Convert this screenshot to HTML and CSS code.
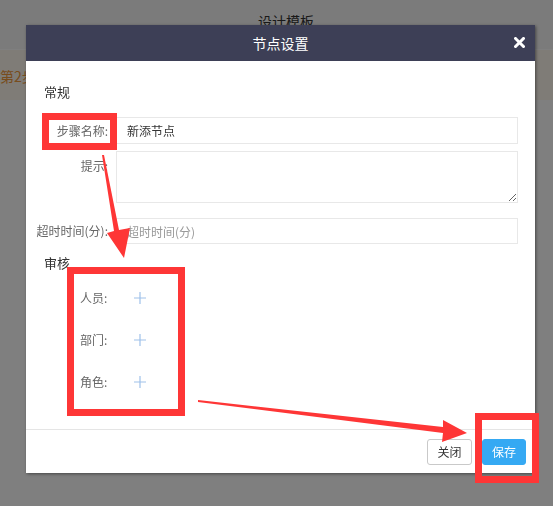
FILE: index.html
```html
<!DOCTYPE html>
<html lang="zh-CN">
<head>
  <meta charset="UTF-8" />
  <title>设计模板</title>
  <link rel="stylesheet" href="styles.css">
</head>
<body>

  <div class="page">
    <div class="page-head">设计模板</div>
    <div class="steps"><span class="step">第2步</span></div>
  </div>

  <div class="mask"></div>

  <div class="dialog">
    <div class="dialog-head">
      <span class="dialog-title">节点设置</span>
      <span class="dialog-close">
        <svg width="11" height="11" viewBox="0 0 11 11"><path d="M1.5 1.5 L9.5 9.5 M9.5 1.5 L1.5 9.5" stroke="#fff" stroke-width="3" stroke-linecap="square"/></svg>
      </span>
    </div>

    <div class="dialog-body">
      <div class="section-title">常规</div>

      <div class="form-row">
        <label class="form-label">步骤名称:</label>
        <input class="form-input" type="text" value="新添节点">
      </div>

      <div class="form-row row-tip">
        <label class="form-label label-top">提示:</label>
        <textarea class="form-input form-textarea"></textarea>
      </div>

      <div class="form-row row-timeout">
        <label class="form-label">超时时间(分):</label>
        <input class="form-input input-small" type="text" placeholder="超时时间(分)">
      </div>

      <div class="section-title section-audit">审核</div>

      <div class="audit-list">
        <div class="audit-row">
          <span class="audit-label">人员:</span>
          <span class="add-btn"><svg width="12" height="12" viewBox="0 0 12 12"><path d="M6 0 V12 M0 6 H12" stroke="#9fc1ea" stroke-width="1.2"/></svg></span>
        </div>
        <div class="audit-row">
          <span class="audit-label">部门:</span>
          <span class="add-btn"><svg width="12" height="12" viewBox="0 0 12 12"><path d="M6 0 V12 M0 6 H12" stroke="#9fc1ea" stroke-width="1.2"/></svg></span>
        </div>
        <div class="audit-row">
          <span class="audit-label">角色:</span>
          <span class="add-btn"><svg width="12" height="12" viewBox="0 0 12 12"><path d="M6 0 V12 M0 6 H12" stroke="#9fc1ea" stroke-width="1.2"/></svg></span>
        </div>
      </div>
    </div>

    <div class="dialog-foot">
      <button class="btn">关闭</button>
      <button class="btn btn-primary">保存</button>
    </div>
  </div>

  <!-- screenshot annotations -->
  <svg class="marks" width="553" height="506" viewBox="0 0 553 506">
    <g fill="none" stroke="#fe3636" stroke-width="7">
      <rect x="45.5" y="116.5" width="68" height="30"/>
      <rect x="70.5" y="270.5" width="111" height="142"/>
      <rect x="478.5" y="416.5" width="57" height="63"/>
    </g>
    <g fill="#fe3636">
      <polygon points="102,155 104,155 119,230 130,228 124,258 107,233 114,231"/>
      <polygon points="198,400 443,427 443,420 467,433 442,442 443,433 198,402"/>
    </g>
  </svg>

</body>
</html>
```

FILE: styles.css
```css
body { margin: 0; background: #fff; font-family: "Noto Sans CJK SC", "Liberation Sans", sans-serif; font-size: 12px; color: #333; }

.page { width: 553px; height: 506px; }
.page-head { height: 49px; line-height: 42px; padding-left: 258px; font-size: 14px; color: #333; background: #f6f6f6; border-bottom: 1px solid #fff; }
.steps { height: 50px; background: #fff8ef; }
.step { display: inline-block; margin-top: 18px; line-height: 16px; font-size: 14px; color: #f09a3c; }

.mask { position: fixed; left: 0; top: 0; right: 0; bottom: 0; background: rgba(0, 0, 0, 0.5); }

.dialog { position: absolute; left: 26px; top: 25px; width: 509px; height: 448px; background: #fff; box-shadow: 1px 1px 3px rgba(0, 0, 0, 0.45); display: flex; flex-direction: column; }

.dialog-head { height: 36px; background: #3d3f56; display: flex; align-items: center; justify-content: center; position: relative; }
.dialog-title { color: #fff; font-size: 14px; line-height: 20px; }
.dialog-close { position: absolute; right: 10px; top: 12px; width: 11px; height: 11px; }
.dialog-close svg { display: block; }

.dialog-body { flex: 1; padding: 21px 17px 0 8px; }
.section-title { margin-left: 10px; line-height: 20px; font-size: 13px; color: #333; }

.form-row { display: flex; align-items: center; margin-top: 15px; }
.row-tip { align-items: flex-start; margin-top: 7px; }
.row-timeout { margin-top: 15px; }
.form-label { width: 74px; margin-right: 8px; text-align: right; color: #666; line-height: 16px; white-space: nowrap; }
.label-top { padding-top: 7px; }
.form-input { flex: 1; box-sizing: border-box; height: 27px; padding: 0 10px; border: 1px solid #e8e8e8; font-family: inherit; font-size: 12px; color: #333; outline: none; }
.form-input::placeholder { color: #999; }
.form-textarea { height: 52px; padding: 6px 10px; resize: vertical; margin: 0; }
.input-small { height: 26px; }

.section-audit { margin-top: 9px; }

.audit-list { margin-top: 4px; padding-left: 46px; }
.audit-row { display: flex; align-items: center; height: 42px; }
.audit-label { width: 54px; color: #666; line-height: 16px; }
.add-btn { width: 12px; height: 12px; }
.add-btn svg { display: block; }

.dialog-foot { height: 43px; border-top: 1px solid #e5e5e5; display: flex; align-items: center; justify-content: flex-end; gap: 10px; padding-right: 9px; }
.btn { height: 26px; width: 45px; padding: 0; border: 1px solid #c9c9c9; border-radius: 3px; background: #fff; color: #333; font-family: inherit; font-size: 12px; }
.btn-primary { width: 44px; border-color: #35a9f3; background: #35a9f3; color: #fff; }

.marks { position: absolute; left: 0; top: 0; }
```
